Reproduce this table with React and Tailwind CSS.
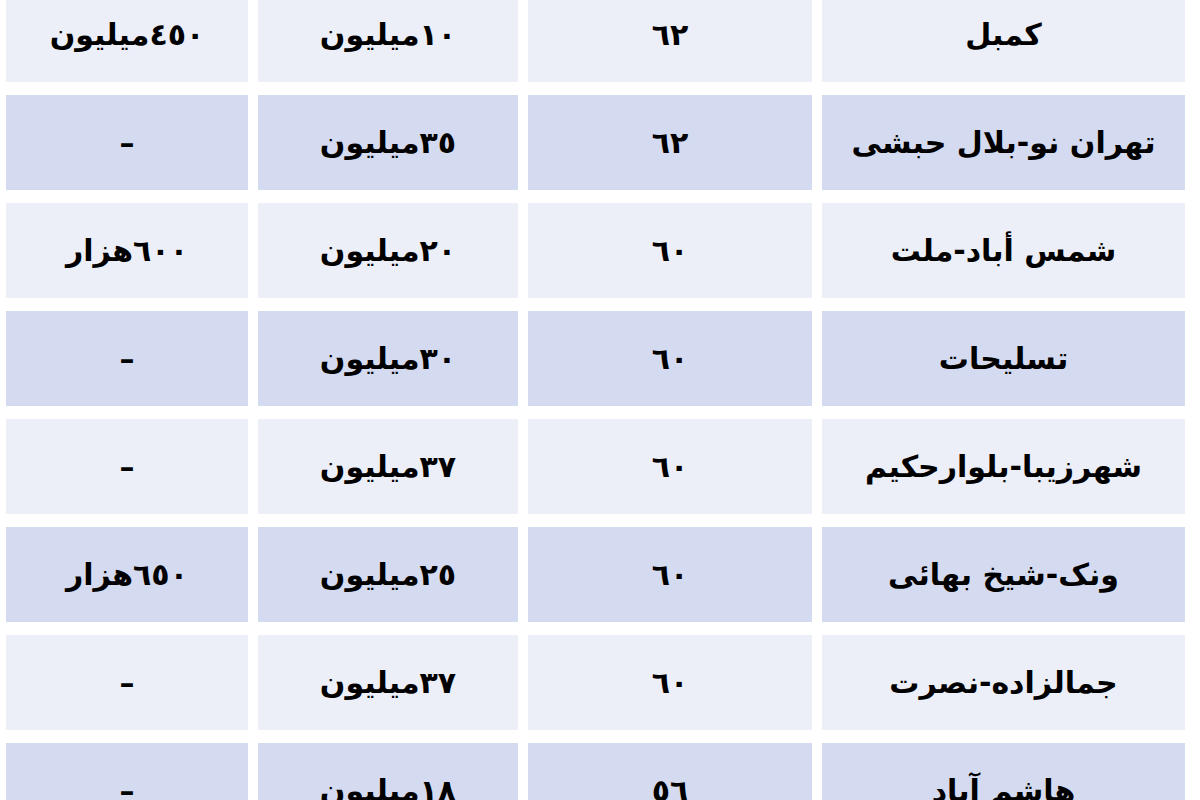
import React from "react";

const rows = [
  ["کمبل", "٦٢", "١٠میلیون", "٤٥٠میلیون"],
  ["تهران نو-بلال حبشی", "٦٢", "٣٥میلیون", "–"],
  ["شمس أباد-ملت", "٦٠", "٢٠میلیون", "٦٠٠هزار"],
  ["تسلیحات", "٦٠", "٣٠میلیون", "–"],
  ["شهرزیبا-بلوارحکیم", "٦٠", "٣٧میلیون", "–"],
  ["ونک-شیخ بهائی", "٦٠", "٢٥میلیون", "٦٥٠هزار"],
  ["جمالزاده-نصرت", "٦٠", "٣٧میلیون", "–"],
  ["هاشم آباد", "٥٦", "١٨میلیون", "–"],
];

export default function App() {
  return (
    <div
      dir="rtl"
      className="w-[1200px] h-[800px] overflow-hidden bg-white pr-[15px] pl-[5px]"
      style={{ fontFamily: '"DejaVu Sans", sans-serif' }}
    >
      <div className="flex flex-col gap-[13px] mt-[-13px]">
        {rows.map((r, i) => (
          <div
            key={i}
            className="grid grid-cols-[363px_284px_260px_242px] gap-x-[10px] h-[95px] shrink-0"
          >
            {r.map((c, j) => (
              <div
                key={j}
                className={`flex items-center justify-center text-[30px] font-bold text-black ${
                  i % 2 === 0 ? "bg-[#eceef8]" : "bg-[#d4daef]"
                }`}
              >
                {c}
              </div>
            ))}
          </div>
        ))}
      </div>
    </div>
  );
}
